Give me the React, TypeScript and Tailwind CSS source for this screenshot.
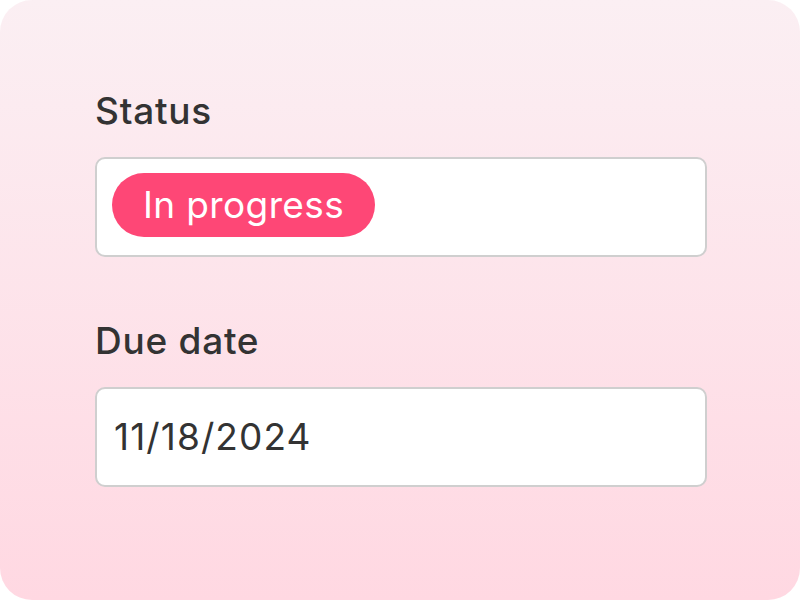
import React from "react";

const font = { fontFamily: "Inter, 'Noto Sans', sans-serif" };

function Field({ label, children, className = "" }: { label: string; children: React.ReactNode; className?: string }) {
  return (
    <div className={className}>
      <div className="text-[37px] leading-[44px] font-medium tracking-[0.02em] text-[#333333]">{label}</div>
      <div className="mt-[24px] h-[100px] w-[612px] rounded-[10px] border-2 border-[#cfcfcf] bg-white">
        {children}
      </div>
    </div>
  );
}

export default function App() {
  return (
    <div className="w-[800px] h-[600px] bg-white" style={font}>
      <div className="w-full h-full rounded-[32px] bg-gradient-to-b from-[#fbeff3] to-[#ffd8e2] pl-[95px] pt-[89px]">
        <Field label="Status">
          <div className="pt-[14px] pl-[15px]">
            <span className="inline-flex h-[64px] items-center rounded-full bg-[#fe4776] px-[31px] text-[37px] tracking-[0.01em] text-white">
              In progress
            </span>
          </div>
        </Field>
        <Field label="Due date" className="mt-[62px]">
          <div className="flex h-full items-center pl-[17px] text-[37px] leading-[44px] tracking-[0.03em] text-[#333333]">
            11/18/2024
          </div>
        </Field>
      </div>
    </div>
  );
}
